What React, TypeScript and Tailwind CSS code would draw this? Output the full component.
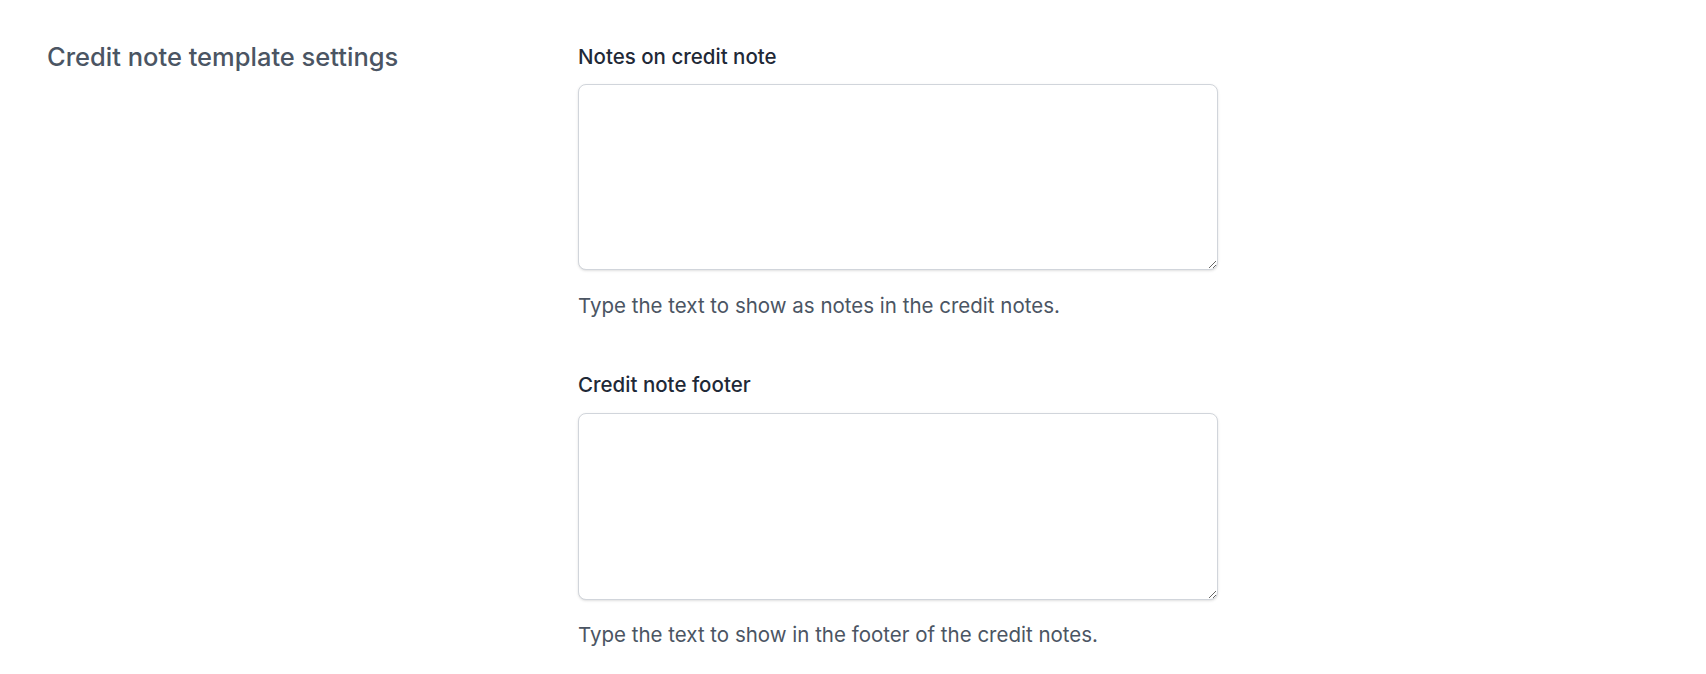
export default function App() {
  return (
    <div className="min-h-screen bg-white" style={{ fontFamily: 'Inter, "Noto Sans", sans-serif' }}>
      <div className="flex pl-[47px] pt-[41px]">
        <div className="w-[531px] shrink-0">
          <h2 className="text-[25.5px] leading-8 font-medium text-[#4b5563]">Credit note template settings</h2>
        </div>
        <div className="w-[640px] pt-[2px]">
          <div>
            <label className="block text-[20.5px] leading-7 font-medium text-[#1f2937]">Notes on credit note</label>
            <textarea className="mt-[13px] block w-full h-[186px] rounded-lg border border-[#d1d5db] bg-white shadow-sm" />
            <p className="mt-[22px] text-[20.5px] leading-7 text-[#4b5563]">Type the text to show as notes in the credit notes.</p>
          </div>
          <div className="mt-[51px]">
            <label className="block text-[20.5px] leading-7 font-medium text-[#1f2937]">Credit note footer</label>
            <textarea className="mt-[14px] block w-full h-[187px] rounded-lg border border-[#d1d5db] bg-white shadow-sm" />
            <p className="mt-[21px] text-[20.5px] leading-7 text-[#4b5563]">Type the text to show in the footer of the credit notes.</p>
          </div>
        </div>
      </div>
    </div>
  );
}
